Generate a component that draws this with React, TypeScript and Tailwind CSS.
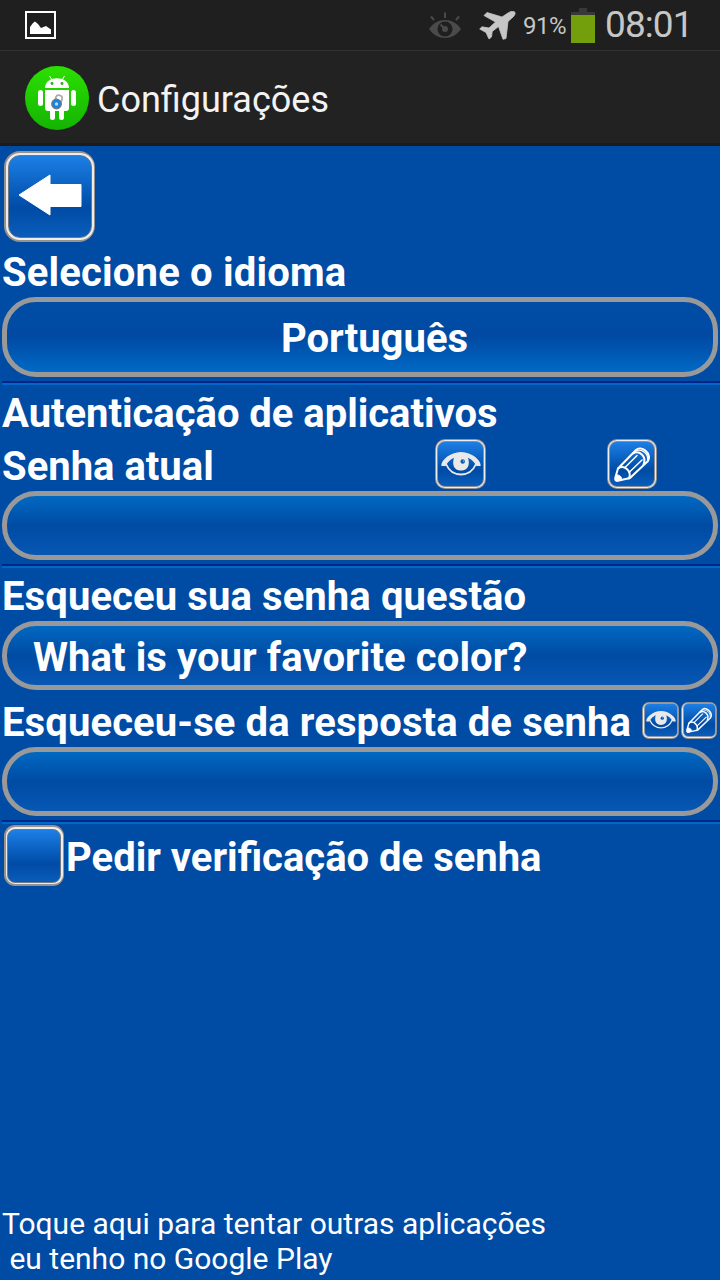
import React from 'react';

function GlossyTile({ size, children, frame = 'lg' }: { size: string; children?: React.ReactNode; frame?: 'lg' | 'check' | 'md' | 'sm' }) {
  const outer = {
    lg: 'rounded-[16px] pt-[1.5px] px-[1.5px] pb-[2px]',
    check: 'rounded-[11px] pt-[2px] px-[1.5px] pb-[2px]',
    md: 'rounded-[10px] p-px pb-[1.5px]',
    sm: 'rounded-[7px] p-px',
  }[frame];
  const mid = {
    lg: 'rounded-[14px] p-[2px]',
    check: 'rounded-[9px] p-[1.5px]',
    md: 'rounded-[9px] p-px',
    sm: 'rounded-[6px] p-[0.5px]',
  }[frame];
  const inner = {
    lg: 'rounded-[12px] border border-[#6d7786]',
    check: 'rounded-[8px] border border-[#6d7786]',
    md: 'rounded-[8px] border border-[#8a8f98]',
    sm: 'rounded-[5px] border border-[#8a9cb5]',
  }[frame];
  return (
    <div className={`shrink-0 bg-[#96928f] ${outer} ${size}`}>
      <div className={`h-full w-full bg-[#efedea] ${mid}`}>
        <div className={`flex h-full w-full items-center justify-center bg-linear-to-b from-[#1d7fe6] via-[#004ba5] via-65% to-[#0b5dbb] ${inner}`}>
          {children}
        </div>
      </div>
    </div>
  );
}

function Eye({ className }: { className: string }) {
  return (
    <svg viewBox="0 0 40 24" className={className} fill="none">
      <path d="M5 12C11 26 29 26 35 12" stroke="#e9e9e9" strokeWidth="1.800" />
      <path d="M.5 14C-1 10 8 0 20 0S41 10 39.500 14H35.500C33.500 10.500 31 7.500 27 5.800C29.500 14 26 18.500 20 18.500S10.500 14 13 5.800C9 7.500 6.500 10.500 4.500 14Z" fill="#e9e9e9" />
      <circle cx="21.700" cy="9.500" r="2.200" fill="#0b59b8" />
      <circle cx="22.400" cy="9" r=".6" fill="#d5e6f8" />
    </svg>
  );
}

function Pencil({ className }: { className: string }) {
  return (
    <svg viewBox="0 0 36 36" className={className} fill="none" stroke="#fff" strokeWidth="2" strokeLinejoin="round" strokeLinecap="round">
      <path d="M1.500 34Q1 33 1.500 31L4 22.500L22 4C27-1 38 7 34 15L16 32L5 34.500Q2 35 1.500 34Z" />
      <path d="M4 22.500C10 18 18 25 15 32.500M19 7.500C25 4 33 10 29.500 18.500" />
      <path d="M22.500 4.500C28 2.500 34.500 8 33.500 14" strokeWidth="1.200" />
      <path d="M11 21.500L23 9.500M15.500 26L28 14" strokeWidth="1.500" />
      <path d="M1.500 34L2.500 29C5.500 28.500 8 31 7.500 33.500L3 35Z" fill="#fff" strokeWidth="1" />
    </svg>
  );
}

function Pill({ children, className }: { children?: React.ReactNode; className: string }) {
  return (
    <div className={`mx-[2px] flex shrink-0 items-center rounded-[34px] border-[5px] border-[#999999] text-[40px] font-bold ${className}`}>
      {children}
    </div>
  );
}

const recessed = 'h-[69px] bg-linear-to-b from-[#0069c2] via-[#004ba3] to-[#0757b4]';

function Divider() {
  return <div className="mt-1 ml-[2px] h-1 shrink-0 border-t-2 border-b-2 border-t-[#00268a] border-b-[#0068c6]" />;
}

function StatusBar() {
  return (
    <div className="flex h-[51px] shrink-0 items-start border-b border-[#333333] bg-[#1f1f1f] text-[#c6c6c6]">
      <svg className="mt-[10px] ml-[25px] h-[29px] w-[31px]" viewBox="0 0 31 29">
        <path d="M1 2H30V28H1Z" fill="none" stroke="#fff" strokeWidth="2" />
        <path d="M5 24V17L8 13L10 11.500L13 14L16 18L21 16L26 19.500V24Z" fill="#fff" />
      </svg>
      <svg className="mt-[12px] ml-[373px] h-[27px] w-[32px]" viewBox="0 0 32 27" fill="none" stroke="#4a4a4a">
        <path d="M2 4.500L5 8M16 .5V6M30 4.500L27 8" strokeWidth="2" />
        <path d="M0 17C8 5 24 5 32 17C24 29 8 29 0 17Z" fill="#4a4a4a" stroke="none" />
        <circle cx="16" cy="17" r="7.500" fill="#1f1f1f" stroke="none" />
        <circle cx="16" cy="17" r="3" fill="#4a4a4a" stroke="none" />
        <path d="M11.500 12.500L16 17" strokeWidth="2" />
      </svg>
      <svg className="mt-[11px] ml-[18px] h-[29px] w-[37px]" viewBox="0 0 37 29" fill="#c6c6c6" stroke="#c6c6c6" strokeWidth=".8" strokeLinejoin="round">
        <path d="M35.500 .8C33 0 31 .6 29 2L23 6L8 1.500L5 4.500L16.500 11L10 17L3 15.800L.7 18L7 21.500L10 28L12.500 26L13.200 20.500L19.500 15.500L24 28.300L27 27.500L29 10.500L34 6C36.300 3.800 36.500 2 35.500 .8Z" />
      </svg>
      <span className="mt-[11px] ml-[7px] w-[44px] text-[24px] leading-[30px] tracking-[-0.500px] whitespace-nowrap">91%</span>
      <div className="mt-2 ml-[4px] flex h-[35px] w-6 flex-col items-center">
        <div className="h-1 w-2 bg-[#383838]" />
        <div className="h-[3px] w-6 bg-[#383838]" />
        <div className="h-7 w-6 bg-[#729f0b]" />
      </div>
      <span className="mt-[5px] ml-[10px] text-[37px] leading-[40px] font-normal tracking-[-0.900px] whitespace-nowrap">08:01</span>
    </div>
  );
}

function AppIcon() {
  return (
    <svg className="mt-[2px] ml-[25px] h-16 w-16 shrink-0" viewBox="0 0 64 64">
      <defs>
        <linearGradient id="green" x2="0" y2="1">
          <stop stopColor="#2ce000" />
          <stop offset="1" stopColor="#13b400" />
        </linearGradient>
      </defs>
      <circle cx="32" cy="32" r="32" fill="url(#green)" />
      <g fill="#fff">
        <path d="M20 22C20 9 44 9 44 22Z" />
        <path d="M24.500 10L27 14M39.500 10L37 14" stroke="#fff" />
        <path d="M20 24H44V42Q44 45 41 45H39V51.500A2.500 2.500 0 0 1 34 51.500V45H30V51.500A2.500 2.500 0 0 1 25 51.500V45H23Q20 45 20 42Z" />
        <rect x="13" y="24" width="5" height="16" rx="2.500" />
        <rect x="46" y="24" width="5" height="16" rx="2.500" />
      </g>
      <circle cx="27" cy="17.500" r="1.400" fill="#22ae0b" />
      <circle cx="37" cy="17.500" r="1.400" fill="#22ae0b" />
      <path d="M30 35L31 31C32 28 38 29 37 33L35.500 38" fill="none" stroke="#aaa" strokeWidth="1.800" />
      <circle cx="31.500" cy="38" r="4.800" fill="#1685df" stroke="#777" strokeWidth="1.200" />
      <circle cx="31.500" cy="38" r="1.700" fill="#b4daf5" />
    </svg>
  );
}

export default function App() {
  return (
    <div className="flex h-[1280px] w-[720px] flex-col overflow-hidden bg-[#004ba4] font-['Roboto',sans-serif] text-white">
      <StatusBar />
      <header className="flex h-[95px] shrink-0 items-center border-b-[3px] border-[#1b1b1b] bg-[#222222] pb-px">
        <AppIcon />
        <h1 className="ml-2 pt-[6px] text-[36px] leading-[44px] font-normal text-[#f3f3f3]">Configurações</h1>
      </header>
      <main className="flex grow flex-col text-[40px] font-bold whitespace-nowrap">
        <div className="mt-[5px] ml-[4px] shrink-0">
          <GlossyTile size="h-[91px] w-[91px]">
            <svg className="mb-[3px] h-[42px] w-[64px]" viewBox="0 0 64 42">
              <path d="M1 21L32 1V10.500H63V32.500H32V41Z" fill="#fff" stroke="#fff" strokeLinejoin="round" />
            </svg>
          </GlossyTile>
        </div>
        <div className="mt-[2px] ml-[2px] flex h-[53px] shrink-0 items-center pt-[4px] tracking-[0.170px]"><span>Selecione o idioma</span></div>
        <Pill className="h-20 justify-center bg-linear-to-b from-[#004da6] via-[#004aa3] to-[#006ac6] pt-[4px] pl-[29px]"><span>Português</span></Pill>
        <Divider />
        <div className="ml-[2px] flex h-[53px] shrink-0 items-center pt-[4px] tracking-[-0.030px]"><span>Autenticação de aplicativos</span></div>
        <div className="ml-[2px] flex h-[53px] shrink-0 items-center">
          <span className="w-[433px] pt-[4px]">Senha atual</span>
          <GlossyTile size="mb-px h-[50px] w-[51px]" frame="md"><Eye className="h-6 w-10 shrink-0" /></GlossyTile>
          <div className="w-[121px]" />
          <GlossyTile size="mb-px h-[50px] w-[50px]" frame="md"><Pencil className="h-9 w-9 shrink-0" /></GlossyTile>
        </div>
        <Pill className={recessed} />
        <Divider />
        <div className="ml-[2px] flex h-[53px] shrink-0 items-center pt-[4px] tracking-[0.100px]"><span>Esqueceu sua senha questão</span></div>
        <Pill className={`${recessed} pt-[4px] pl-[26px] tracking-[0.080px]`}><span>What is your favorite color?</span></Pill>
        <div className="ml-[2px] flex h-[57px] shrink-0 items-center">
          <span className="w-[640px] pt-[9px] tracking-[0.110px]">Esqueceu-se da resposta de senha</span>
          <GlossyTile size="mt-[3px] h-[37px] w-[37px]" frame="sm"><Eye className="h-[18px] w-[30px] shrink-0" /></GlossyTile>
          <div className="w-[2px]" />
          <GlossyTile size="mt-[3px] h-[37px] w-[36px]" frame="sm"><Pencil className="h-[26px] w-[26px] shrink-0" /></GlossyTile>
        </div>
        <Pill className={recessed} />
        <Divider />
        <div className="mt-[1px] ml-[4px] flex h-[61px] shrink-0 items-center">
          <GlossyTile size="h-[61px] w-[60px]" frame="check" />
          <span className="ml-[2px] pt-[4px]">Pedir verificação de senha</span>
        </div>
        <footer className="mt-auto mb-[4px] ml-[2px] text-[30px] leading-[35px] font-normal whitespace-pre">
          <div>Toque aqui para tentar outras aplicações</div>
          <div>{' eu tenho no Google Play'}</div>
        </footer>
      </main>
    </div>
  );
}
